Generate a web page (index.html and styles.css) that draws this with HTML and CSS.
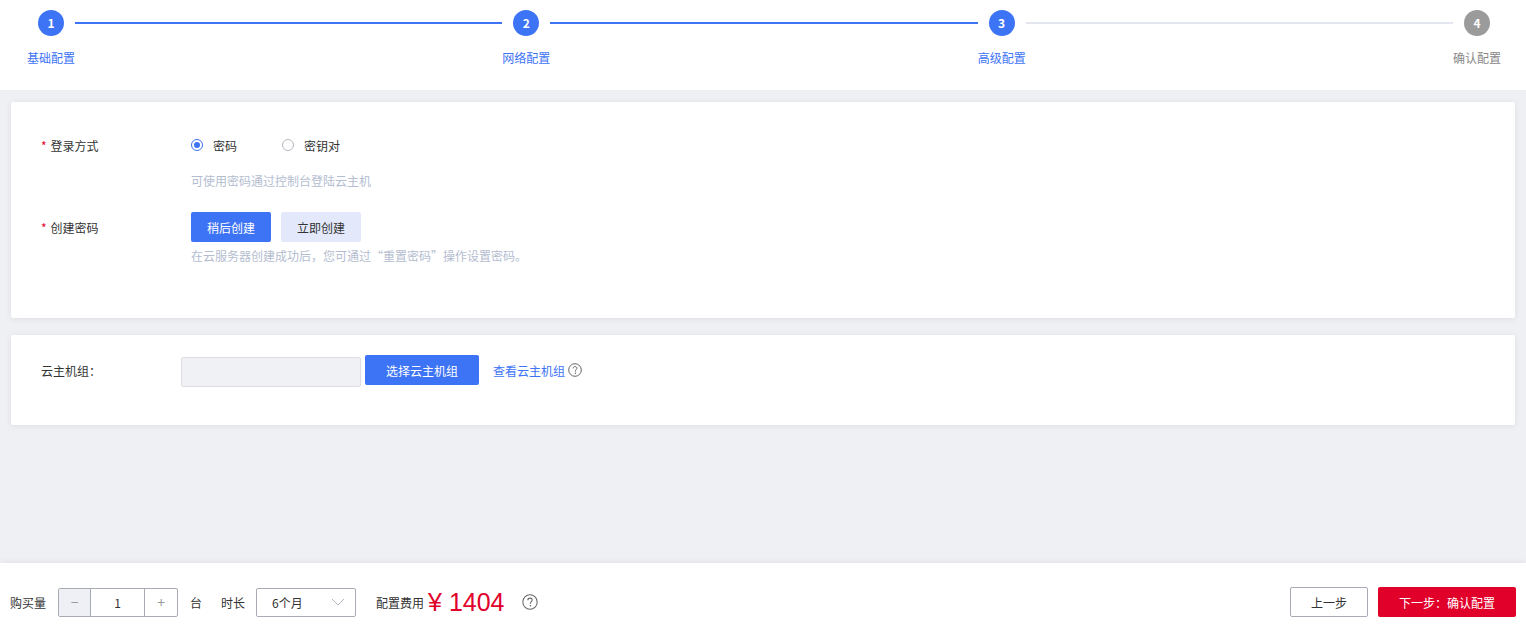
FILE: index.html
```html
<!DOCTYPE html>
<html lang="zh-CN">
<head>
    <meta charset="UTF-8">
    <meta name="viewport" content="width=device-width, initial-scale=1.0">
    <title>高级配置</title>
    <link rel="stylesheet" href="styles.css">
</head>
<body>

    <!-- 步骤条 -->
    <div class="steps">
        <div class="step done">
            <div class="step-num">1</div>
            <div class="step-title">基础配置</div>
        </div>
        <div class="step-line done"></div>
        <div class="step done">
            <div class="step-num">2</div>
            <div class="step-title">网络配置</div>
        </div>
        <div class="step-line done"></div>
        <div class="step done">
            <div class="step-num">3</div>
            <div class="step-title">高级配置</div>
        </div>
        <div class="step-line"></div>
        <div class="step">
            <div class="step-num">4</div>
            <div class="step-title">确认配置</div>
        </div>
    </div>

    <div class="main">
        <!-- 登录方式 -->
        <div class="card card-login">
            <div class="form-row">
                <div class="form-label"><span class="required">*</span>登录方式</div>
                <div class="radio-group">
                    <label class="radio checked"><span class="radio-dot"></span>密码</label>
                    <label class="radio"><span class="radio-dot"></span>密钥对</label>
                </div>
            </div>
            <div class="form-tip tip-first">可使用密码通过控制台登陆云主机</div>

            <div class="form-row row-password">
                <div class="form-label"><span class="required">*</span>创建密码</div>
                <button class="btn btn-primary">稍后创建</button>
                <button class="btn btn-light">立即创建</button>
            </div>
            <div class="form-tip tip-second">在云服务器创建成功后，您可通过“重置密码”操作设置密码。</div>
        </div>

        <!-- 云主机组 -->
        <div class="card card-group">
            <div class="form-row">
                <div class="form-label label-narrow">云主机组：</div>
                <input class="group-input" type="text" disabled>
                <button class="btn btn-primary btn-group">选择云主机组</button>
                <a class="link" href="#">查看云主机组</a>
                <svg class="help" width="14" height="14" viewBox="0 0 14 14">
                    <circle cx="7" cy="7" r="6.3" fill="none" stroke="#666" stroke-width="1"/>
                    <path d="M5.1 5.4 C5.1 4.2 6 3.6 7 3.6 C8.1 3.6 8.9 4.3 8.9 5.3 C8.9 6.5 7.4 6.7 7.4 7.9 L7.4 8.6" fill="none" stroke="#666" stroke-width="1"/>
                    <circle cx="7.4" cy="10.3" r="0.7" fill="#666"/>
                </svg>
            </div>
        </div>
    </div>

    <!-- 底部购买栏 -->
    <div class="footer">
        <span class="ft-label">购买量</span>
        <div class="counter">
            <span class="counter-btn minus">−</span>
            <span class="counter-value">1</span>
            <span class="counter-btn">+</span>
        </div>
        <span class="ft-unit">台</span>
        <span class="ft-label">时长</span>
        <div class="select">
            <span>6个月</span>
            <svg width="14" height="8" viewBox="0 0 14 8">
                <path d="M1 1 L7 7 L13 1" fill="none" stroke="#b0b3ba" stroke-width="1"/>
            </svg>
        </div>
        <span class="ft-label fee-label">配置费用</span>
        <span class="price">¥ 1404</span>
        <svg class="help help-footer" width="16" height="16" viewBox="0 0 14 14">
            <circle cx="7" cy="7" r="6.3" fill="none" stroke="#666" stroke-width="0.9"/>
            <path d="M5.1 5.4 C5.1 4.2 6 3.6 7 3.6 C8.1 3.6 8.9 4.3 8.9 5.3 C8.9 6.5 7.4 6.7 7.4 7.9 L7.4 8.6" fill="none" stroke="#666" stroke-width="0.9"/>
            <circle cx="7.4" cy="10.3" r="0.7" fill="#666"/>
        </svg>
        <div class="ft-actions">
            <button class="btn btn-outline">上一步</button>
            <button class="btn btn-danger">下一步：确认配置</button>
        </div>
    </div>

</body>
</html>
```

FILE: styles.css
```css
* {
    box-sizing: border-box;
}

body {
    font-family: "Noto Sans CJK SC", "Liberation Sans", sans-serif;
    font-size: 12px;
    color: #333;
    margin: 0;
    height: 100vh;
    display: flex;
    flex-direction: column;
    background-color: #eef0f4;
}

/* 步骤条 */
.steps {
    background-color: #ffffff;
    height: 90px;
    display: flex;
    padding: 10px 25px 0 27px;
}

.step {
    width: 48px;
    display: flex;
    flex-direction: column;
    align-items: center;
}

.step-num {
    width: 26px;
    height: 26px;
    border-radius: 50%;
    background-color: #9b9b9b;
    color: #fff;
    font-weight: bold;
    font-size: 12px;
    line-height: 26px;
    text-align: center;
}

.step-title {
    margin-top: 14px;
    line-height: 16px;
    color: #888;
    white-space: nowrap;
}

.step.done .step-num {
    background-color: #3d73f5;
}

.step.done .step-title {
    color: #3d73f5;
}

.step-line {
    flex: 1;
    height: 2px;
    margin-top: 12px;
    background-color: #e3e6ef;
}

.step-line.done {
    background-color: #3d73f5;
}

/* 内容区 */
.main {
    flex: 1;
    padding: 12px 11px 0;
}

.card {
    background-color: #fff;
    border-radius: 2px;
    box-shadow: 0 1px 6px rgba(0, 0, 0, 0.08);
    padding: 0 30px;
}

.card-login {
    height: 216px;
    padding-top: 33px;
}

.card-group {
    height: 90px;
    margin-top: 17px;
    padding-top: 18px;
}

.form-row {
    display: flex;
    align-items: center;
}

.form-label {
    width: 150px;
    flex-shrink: 0;
    color: #333;
}

.label-narrow {
    width: 140px;
}

.required {
    color: #e1002a;
    margin-right: 4px;
}

.radio-group {
    display: flex;
    height: 20px;
    align-items: center;
}

.radio {
    display: flex;
    align-items: center;
    margin-right: 45px;
    color: #333;
}

.radio-dot {
    width: 12px;
    height: 12px;
    border: 1px solid #b7b9c0;
    border-radius: 50%;
    margin-right: 10px;
    position: relative;
}

.radio.checked .radio-dot {
    border-color: #3d73f5;
}

.radio.checked .radio-dot::after {
    content: "";
    position: absolute;
    left: 2px;
    top: 2px;
    width: 6px;
    height: 6px;
    border-radius: 50%;
    background-color: #3d73f5;
}

.form-tip {
    margin-left: 150px;
    color: #b4bdd0;
    line-height: 14px;
}

.tip-first {
    margin-top: 19px;
}

.row-password {
    margin-top: 24px;
}

.tip-second {
    margin-top: 7px;
}

.btn {
    font-family: inherit;
    font-size: 12px;
    height: 30px;
    border-radius: 2px;
    border: none;
    cursor: pointer;
    padding: 0;
}

.btn-primary {
    width: 80px;
    background-color: #3d73f5;
    color: #fff;
}

.btn-light {
    width: 80px;
    margin-left: 10px;
    background-color: #e3e9fb;
    color: #333;
}

.group-input {
    width: 180px;
    height: 30px;
    border: 1px solid #dcdee3;
    border-radius: 2px;
    background-color: #f0f1f5;
    margin-top: 4px;
}

.btn-group {
    width: 114px;
    margin-left: 4px;
}

.link {
    color: #3d73f5;
    text-decoration: none;
    margin-left: 14px;
}

.help {
    margin-left: 3px;
}

/* 底部 */
.footer {
    height: 76px;
    background-color: #fff;
    box-shadow: 0 -1px 6px rgba(0, 0, 0, 0.06);
    display: flex;
    align-items: center;
    padding: 2px 10px 0;
}

.ft-label {
    color: #333;
}

.counter {
    display: flex;
    height: 29px;
    margin-left: 12px;
    border: 1px solid #a8abb3;
    border-radius: 2px;
}

.counter-btn {
    width: 32px;
    line-height: 27px;
    text-align: center;
    color: #999;
    font-size: 14px;
}

.counter-btn.minus {
    background-color: #eef0f5;
    border-right: 1px solid #a8abb3;
}

.counter-value {
    width: 54px;
    line-height: 27px;
    text-align: center;
    border-right: 1px solid #a8abb3;
}

.ft-unit {
    margin: 0 19px 0 12px;
}

.select {
    width: 100px;
    height: 29px;
    margin-left: 11px;
    border: 1px solid #a8abb3;
    border-radius: 2px;
    display: flex;
    align-items: center;
    justify-content: space-between;
    padding: 0 10px 0 15px;
}

.fee-label {
    margin-left: 20px;
}

.price {
    font-family: "Liberation Sans", sans-serif;
    color: #e1002a;
    font-size: 25px;
    margin-left: 4px;
    line-height: 29px;
}

.help-footer {
    margin-left: 17px;
}

.ft-actions {
    margin-left: auto;
    display: flex;
    gap: 10px;
}

.btn-outline {
    width: 78px;
    background-color: #fff;
    border: 1px solid #a8abb3;
    color: #333;
}

.btn-danger {
    width: 138px;
    background-color: #e1002a;
    color: #fff;
}
```
